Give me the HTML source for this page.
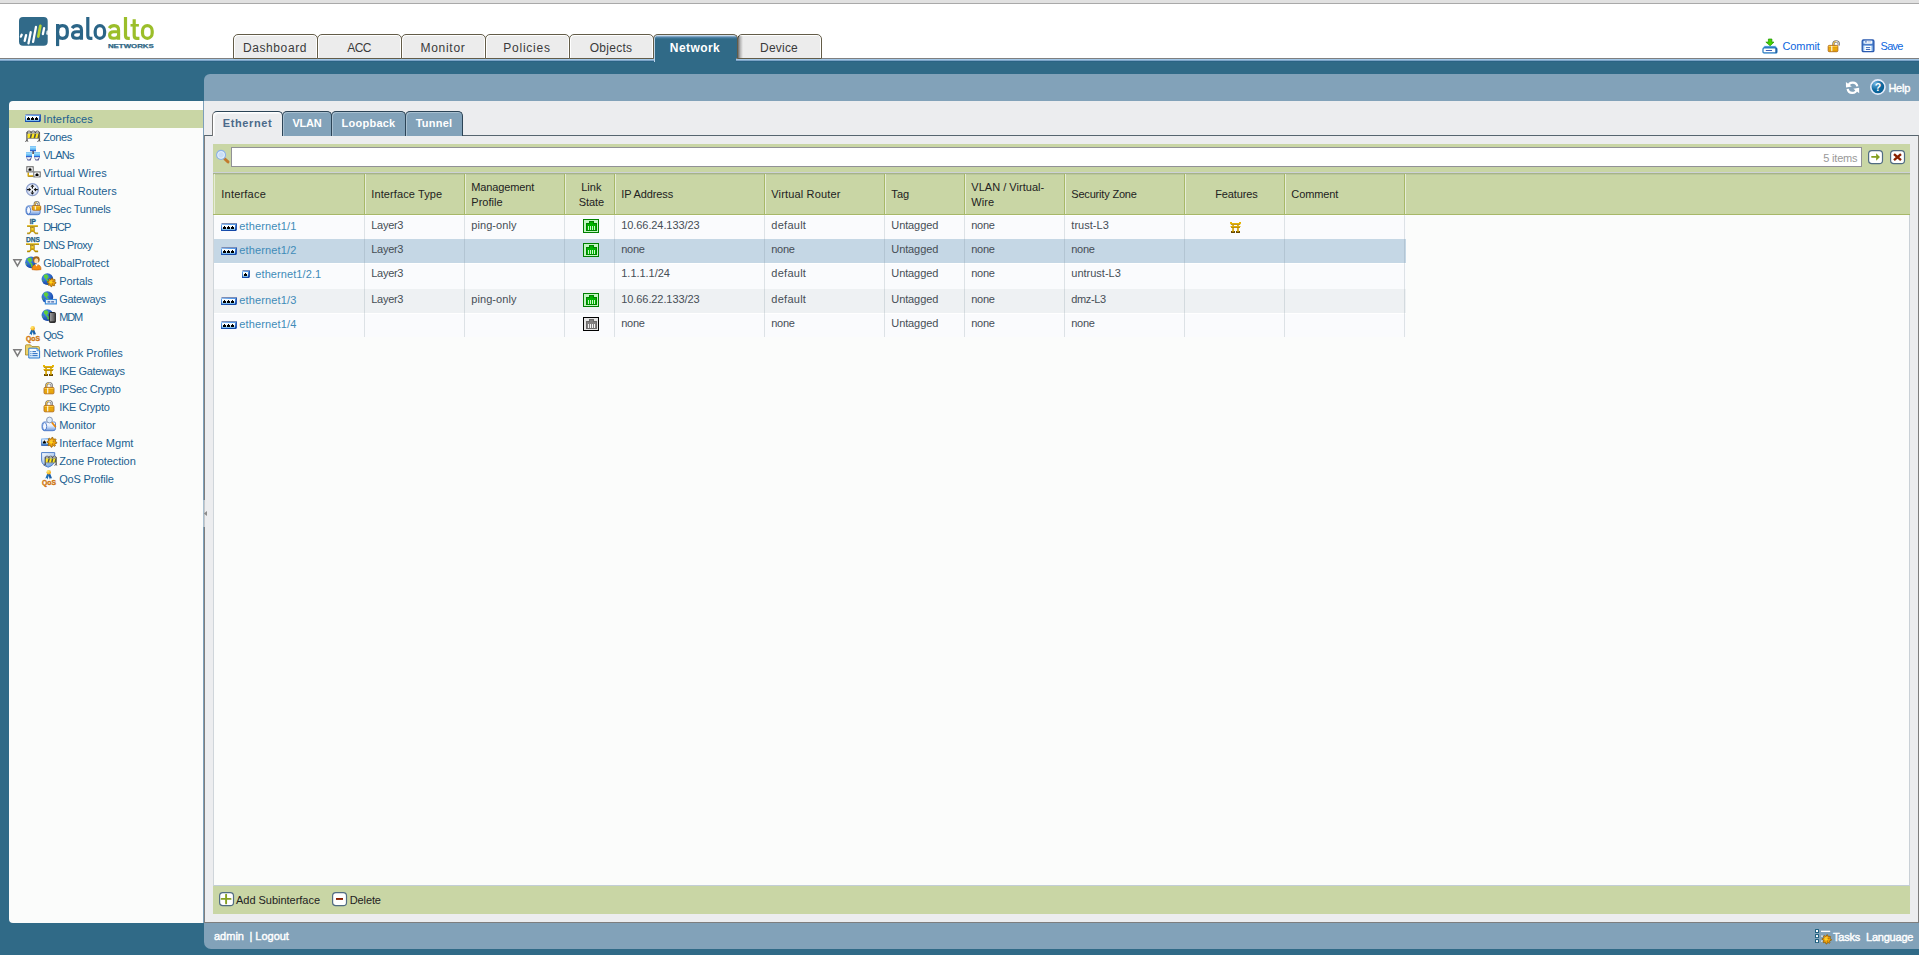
<!DOCTYPE html>
<html>
<head>
<meta charset="utf-8">
<title>Interfaces</title>
<style>
*{box-sizing:border-box;}
html,body{margin:0;padding:0;}
body{width:1919px;height:955px;overflow:hidden;background:#306a87;font-family:"Liberation Sans",sans-serif;font-size:11px;color:#222;position:relative;}
.abs{position:absolute;white-space:nowrap;}
svg{display:block;overflow:visible;}
#topbar{left:0;top:0;width:1919px;height:3px;background:#e1e1e1;}
#topline{left:0;top:3px;width:1919px;height:1px;background:#a9a9a9;}
#hdr{left:0;top:4px;width:1919px;height:54px;background:#fff;}
#hl1{left:0;top:58px;width:1919px;height:1px;background:#7f7f7f;}
#hl2{left:0;top:59px;width:1919px;height:3px;background:linear-gradient(#a0c6e7 0,#a0c6e7 33.3%,#7ba3c6 33.3%,#7ba3c6 66.6%,#2b6385 66.6%);}
.nt{position:absolute;top:34px;width:85px;height:25px;border:1px solid #635c48;border-radius:5px 5px 0 0;background:#ececec;box-shadow:inset 1px 1px 0 #fff, inset -1px 0 0 #fff;}
.nt.act{background:linear-gradient(#eef4fb 0,#a8c4dc 1px,#5a8ab0 2px,#306a87 4px,#306a87 100%);border-color:#635c48 #635c48 transparent #635c48;box-shadow:inset 1px 0 0 rgba(215,230,245,.85);height:24px;border-bottom:none;z-index:2;}
.ntt{font-size:12px;line-height:14px;color:#3a3a3a;z-index:3;}
.ntt.b{color:#fff;font-weight:bold;}
.toplnk{color:#0c66de;font-size:11px;line-height:14px;}
#side{left:9px;top:101px;width:195px;height:822px;background:#fbfcfb;border-radius:4px 0 0 4px;border-right:1px solid #7c9fb9;}
.sl{color:#215f90;line-height:18px;height:18px;}
#mh{left:204px;top:74px;width:1715px;height:27px;background:#82a2b9;border-radius:6px 0 0 0;}
#mb{left:204px;top:101px;width:1715px;height:822px;background:#ecedef;}
#mf{left:204px;top:923px;width:1715px;height:26px;background:#82a2b9;border-radius:0 0 0 7px;}
#tabline{left:204px;top:135px;width:1715px;height:788px;border:1px solid #7e7e7e;border-top-color:#56656f;}
.st{position:absolute;top:111px;height:25px;border:1px solid #2c4456;border-bottom:none;border-radius:5px 5px 0 0;background:#82a2b9;box-shadow:inset 1px 1px 0 #a9c0d0;}
.st.act{background:#ecedef;box-shadow:inset 1px 1px 0 #fff, inset 2px 2px 0 rgba(255,255,255,.6);height:25px;z-index:2;border-left-color:#757575;}
.stt{color:#fff;font-weight:bold;font-size:11px;line-height:14px;z-index:3;}
.stt.a{color:#4b6a8a;}
.wt{color:#fff;line-height:13px;-webkit-text-stroke:.4px #fff;}
.cnt{color:#999;line-height:15px;}
#tb{left:213px;top:144px;width:1697px;height:28px;background:#c9d6a5;}
#srch{left:231px;top:147px;width:1631px;height:20px;background:#fff;border:1px solid #919196;}
#gh{left:213px;top:172px;width:1697px;height:43px;background:linear-gradient(#cdd2d6 0,#cdd2d6 1px,#a6b388 1px,#a6b388 2px,#bbc89b 2px,#bbc89b 3px,#c9d6a5 3px);border-bottom:1px solid #a7b868;}
#gb{left:213px;top:215px;width:1697px;height:671px;background:#fbfcfb;border-right:1px solid #c9d0d6;border-left:1px solid #cfd5da;border-bottom:1px solid #c3ced6;}
#bb{left:213px;top:886px;width:1697px;height:28px;background:#c9d6a5;}
.hc{color:#222;line-height:15px;}
.ct{color:#464e56;line-height:13px;}
.lnk{color:#3f8bb8;line-height:13px;}
.bt{color:#222;line-height:13px;}
#ntsh{left:738px;top:36px;width:5px;height:22px;background:linear-gradient(to right,rgba(0,0,0,.6),rgba(0,0,0,.25) 40%,rgba(0,0,0,0));z-index:3;}
#ntfill{left:654px;top:58px;width:82px;height:4px;background:#306a87;z-index:3;border-left:1px solid #b9d3ea;}
</style>
</head>
<body>
<svg width="0" height="0" style="position:absolute"><defs>
<linearGradient id="gIf" x1="0" y1="0" x2="0" y2="1"><stop offset="0" stop-color="#fff"/><stop offset=".5" stop-color="#eaf7ff"/><stop offset="1" stop-color="#62aeea"/></linearGradient>
<linearGradient id="gIfB" x1="0" y1="0" x2="0.25" y2="1"><stop offset="0" stop-color="#b9d3f3"/><stop offset=".22" stop-color="#5b9eea"/><stop offset="1" stop-color="#1346a6"/></linearGradient>
<linearGradient id="gMon" x1="0" y1="0" x2="0" y2="1"><stop offset="0" stop-color="#c0f4ff"/><stop offset="1" stop-color="#2b93ee"/></linearGradient>
<linearGradient id="gCyl" x1="0" y1="0" x2="0" y2="1"><stop offset="0" stop-color="#fff"/><stop offset=".45" stop-color="#e4edfb"/><stop offset="1" stop-color="#6c97dc"/></linearGradient>
<radialGradient id="gGlobe" cx=".35" cy=".3" r=".8"><stop offset="0" stop-color="#4f95ee"/><stop offset="1" stop-color="#0a3aa0"/></radialGradient>
<radialGradient id="gBall" cx=".35" cy=".3" r=".8"><stop offset="0" stop-color="#fff27a"/><stop offset="1" stop-color="#f09800"/></radialGradient>
<radialGradient id="gHelp" cx=".3" cy=".25" r=".9"><stop offset="0" stop-color="#6fb2df"/><stop offset=".5" stop-color="#0f6aa0"/><stop offset="1" stop-color="#045a8e"/></radialGradient>
<radialGradient id="gVr" cx=".5" cy=".4" r=".7"><stop offset="0" stop-color="#fff"/><stop offset="1" stop-color="#c3d3f2"/></radialGradient>
<linearGradient id="gLock" x1="0" y1="0" x2="1" y2="0"><stop offset="0" stop-color="#e08a10"/><stop offset=".45" stop-color="#ffd070"/><stop offset="1" stop-color="#e89418"/></linearGradient>
<linearGradient id="gShk" x1="0" y1="0" x2="1" y2="0"><stop offset="0" stop-color="#ffc83a"/><stop offset=".45" stop-color="#ffd766"/><stop offset=".6" stop-color="#f2f2f2"/><stop offset="1" stop-color="#cfcfcf"/></linearGradient>
<linearGradient id="gSave" x1="0" y1="0" x2="1" y2="0"><stop offset="0" stop-color="#4b82d0"/><stop offset=".2" stop-color="#cfe9ff"/><stop offset=".8" stop-color="#a9d2f6"/><stop offset="1" stop-color="#3a6cc0"/></linearGradient>
<linearGradient id="gShield" x1="0" y1="0" x2=".6" y2="1"><stop offset="0" stop-color="#fff"/><stop offset="1" stop-color="#7aa8e4"/></linearGradient>
<linearGradient id="gPhone" x1="0" y1="0" x2="1" y2="0"><stop offset="0" stop-color="#a5a5a5"/><stop offset="1" stop-color="#4a4a4a"/></linearGradient>
<linearGradient id="gDoc" x1="0" y1="0" x2="0" y2="1"><stop offset="0" stop-color="#fff"/><stop offset="1" stop-color="#cfe6f8"/></linearGradient>
<linearGradient id="gGold" x1="0" y1="0" x2="0" y2="1"><stop offset="0" stop-color="#f0c000"/><stop offset="1" stop-color="#b88600"/></linearGradient>
</defs></svg>
<div class="abs" id="topbar"></div><div class="abs" id="topline"></div>
<div class="abs" id="hdr"></div>
<div class="abs" id="hl1"></div><div class="abs" id="hl2"></div>
<svg class="abs" style="left:17px;top:14px" width="140" height="36" viewBox="0 0 140 36"><g transform="translate(-17,-14)">
<rect x="19" y="17" width="28.7" height="28.7" rx="4" fill="#316a89"/>
<g stroke="#fff" stroke-width="2.3" stroke-linecap="round" fill="none">
<path d="M20.9 36.6 L21.7 34.7"/>
<path d="M24.7 40.8 L26.1 35.1"/>
<path d="M28.5 43.3 L30.7 32.2"/>
<path d="M33.1 41.9 L35.95 27"/>
<path d="M42.9 34.1 L44.1 28.2"/>
</g>
<path d="M38.3 36.6 L40.35 25.8" stroke="#b5d334" stroke-width="2.7" stroke-linecap="round" fill="none"/>
<path d="M47.8 30.3 L46.6 31 L46.2 34.2 L47.8 34.9 Z" fill="#fff"/>
<g fill="none" stroke="#2b6587" stroke-width="3.2">
<path d="M57.6 24 V46.1"/>
<path d="M57.6 31 Q57.6 25.6 62.5 25.6 Q67.3 25.6 67.3 31 V32.9 Q67.3 38.3 62.5 38.3 Q57.6 38.3 57.6 32.9"/>
<path d="M87.8 16.9 V35.4 Q87.8 38.3 90.6 38.3 H92.4"/>
<rect x="95.2" y="25.6" width="9.4" height="12.7" rx="4.7" ry="5.4"/>
</g>
<g transform="translate(0,0)" fill="none" stroke="#2b6587" stroke-width="3.1"><path d="M72.1 28.2 Q73.8 25.6 77 25.6 Q81.5 25.6 81.5 30.2 V39.8"/><path d="M81.5 31.7 H76.6 Q72.5 31.7 72.5 35 Q72.5 38.3 76.4 38.3 Q81.5 38.3 81.5 34.4"/></g>
<g transform="translate(37.1,0)" fill="none" stroke="#9bbe2a" stroke-width="3.1"><path d="M72.1 28.2 Q73.8 25.6 77 25.6 Q81.5 25.6 81.5 30.2 V39.8"/><path d="M81.5 31.7 H76.6 Q72.5 31.7 72.5 35 Q72.5 38.3 76.4 38.3 Q81.5 38.3 81.5 34.4"/></g>
<g fill="none" stroke="#9bbe2a" stroke-width="3.2">
<path d="M125.5 16.9 V35.4 Q125.5 38.3 128.3 38.3 H129.8"/>
<path d="M134.2 19.2 V35.4 Q134.2 38.3 137 38.3 H139.4"/>
<path d="M130.5 25.3 H138.9" stroke-width="2.6"/>
<rect x="142.5" y="25.6" width="9.7" height="12.7" rx="4.85" ry="5.4"/>
</g>
<text x="107.9" y="47.7" font-family="Liberation Sans" font-weight="bold" font-size="6.1" fill="#2e6685" stroke="#2e6685" stroke-width=".25" textLength="45.9" lengthAdjust="spacingAndGlyphs">NETWORKS</text>
</g></svg>
<div class="nt" style="left:233px"></div>
<div class="abs ntt" style="left:232.5px;top:41px;letter-spacing:0.587px;width:85px;text-align:center;">Dashboard</div>
<div class="nt" style="left:317px"></div>
<div class="abs ntt" style="left:316.5px;top:41px;letter-spacing:-0.581px;width:85px;text-align:center;">ACC</div>
<div class="nt" style="left:401px"></div>
<div class="abs ntt" style="left:400.5px;top:41px;letter-spacing:0.712px;width:85px;text-align:center;">Monitor</div>
<div class="nt" style="left:485px"></div>
<div class="abs ntt" style="left:484.5px;top:41px;letter-spacing:0.755px;width:85px;text-align:center;">Policies</div>
<div class="nt" style="left:569px"></div>
<div class="abs ntt" style="left:568.5px;top:41px;letter-spacing:0.273px;width:85px;text-align:center;">Objects</div>
<div class="nt act" style="left:653px"></div>
<div class="abs ntt b" style="left:652.5px;top:41px;letter-spacing:0.422px;width:85px;text-align:center;">Network</div>
<div class="nt" style="left:737px"></div>
<div class="abs ntt" style="left:736.5px;top:41px;letter-spacing:0.219px;width:85px;text-align:center;">Device</div>
<div class="abs" id="ntsh"></div><div class="abs" id="ntfill"></div>
<svg class="abs" style="left:1762px;top:38px" width="16" height="16" viewBox="0 0 16 16"><path d="M1.4 10 L2.6 8.3 H13.4 L14.6 10 V14 Q14.6 14.9 13.7 14.9 H2.3 Q1.4 14.9 1.4 14 Z" fill="none" stroke="#bfeaff" stroke-width="1.6" opacity=".8"/><polygon points="6.4,1 9.9,1 9.9,4.1 12,4.1 8.15,7.8 3.85,4.1 6.4,4.1" fill="#46d400" stroke="#1f9400" stroke-width=".7" stroke-linejoin="round"/><polygon points="2.6,8.3 13.4,8.3 14.9,10.2 1,10.2" fill="#2a80c8"/><rect x="1" y="10" width="13.9" height="4.9" rx="1" fill="#fff" stroke="#2a7ac0" stroke-width="1.2"/><rect x="13.3" y="10" width="1.6" height="4.9" fill="#1c5fa4"/><rect x="3.8" y="12" width="6.2" height=".9" fill="#2a50b0"/></svg>
<div class="abs toplnk" style="left:1782.5px;top:39px;letter-spacing:-0.098px;">Commit</div>
<svg class="abs" style="left:1827px;top:39px" width="16" height="16" viewBox="0 0 16 16"><path d="M6.4 7.0 V5.1000000000000005 A2.7 2.7 0 0 1 11.8 5.1000000000000005 V6.5" fill="none" stroke="#7c7c7c" stroke-width="2.4"/><path d="M6.4 7.0 V5.1000000000000005 A2.7 2.7 0 0 1 11.8 5.1000000000000005 V6.5" fill="none" stroke="url(#gShk)" stroke-width="1"/><rect x="1.2" y="6.4" width="9.65" height="6.3" rx="1" fill="#f4b81c" stroke="#a8621a" stroke-width=".9"/><rect x="1.7" y="7.78" width="8.65" height="0.88" fill="#dc9600"/><rect x="1.7" y="9.55" width="8.65" height="0.88" fill="#dc9600"/><rect x="1.7" y="11.32" width="8.65" height="0.88" fill="#dc9600"/><rect x="1.7" y="6.9" width="8.65" height="0.88" fill="#ffd04a"/><rect x="4.09" y="6.9" width="1.3" height="5.3" fill="#fff" opacity=".8"/></svg>
<svg class="abs" style="left:1861px;top:39px" width="16" height="16" viewBox="0 0 16 16"><rect x="1.2" y="1" width="11.7" height="11.6" rx="1.2" fill="url(#gSave)" stroke="#2a5ab0" stroke-width="1.3"/><rect x="1.8" y="4.6" width="10.5" height="1.9" fill="#3a6cc0" opacity=".85"/><rect x="3.6" y="1.7" width="7.3" height="2.9" fill="#fff"/><rect x="4.4" y="1.7" width="1.1" height="2" fill="#2a5ab0"/><rect x="6.5" y="2" width="3.6" height="1.6" fill="#cfd8ea"/><rect x="3.9" y="7" width="6.3" height="5" fill="#fff"/><rect x="4.9" y="8.2" width="4.3" height=".9" fill="#2a5ab0"/><rect x="4.9" y="10.1" width="4.3" height=".9" fill="#2a5ab0"/></svg>
<div class="abs toplnk" style="left:1880.5px;top:39px;letter-spacing:-0.695px;">Save</div>
<div class="abs" id="side"></div>
<div class="abs" style="left:9px;top:110px;width:194px;height:18px;background:#c9d6a5"></div>
<svg class="abs" style="left:25px;top:114px" width="16" height="9" viewBox="0 0 16 9"><polygon points="1,0 16,0 15,1 0,1" fill="#7d8cb3"/><polygon points="15,1 16,0 16,7 15,8" fill="#2b5ab2"/><rect x="0" y="1" width="15" height="7" fill="url(#gIfB)"/><rect x="1" y="2" width="13" height="5" fill="url(#gIf)"/><path d="M2.0 6 v-2 h1 v-1 h1 v1 h1 v2 z" fill="#000"/><path d="M6.0 6 v-2 h1 v-1 h1 v1 h1 v2 z" fill="#000"/><path d="M10.0 6 v-2 h1 v-1 h1 v1 h1 v2 z" fill="#000"/></svg>
<div class="abs sl" style="left:43.2px;top:110px;letter-spacing:0.149px;">Interfaces</div>
<svg class="abs" style="left:25px;top:128px" width="16" height="18" viewBox="0 0 16 18"><path d="M2 4.2 V12.8 M14.4 4.2 V12.8" stroke="#4a4a4a" stroke-width="1.3" fill="none"/><path d="M0.3 13.5 L2.2 12.4 L2.9 13.7 M12.4 13.5 L14.4 12.4 L15.1 13.7" stroke="#4a4a4a" stroke-width="1" fill="none"/><path d="M2 5 Q2 2.9 4 3 Q6 2.9 6.1 4.8 Q6.2 2.9 8.2 3 Q10.2 2.9 10.3 4.8 Q10.4 2.9 12.4 3 Q14.4 2.9 14.4 5 Z" fill="#fff" stroke="#2a2a2a" stroke-width=".75"/><rect x="2.65" y="5.7" width="11.7" height="4.6" fill="#ffe81c"/><polygon points="5.6,5.7 7.3,5.7 6.2,10.3 4.5,10.3" fill="#55564a"/><polygon points="9.6,5.7 11.3,5.7 10.2,10.3 8.5,10.3" fill="#55564a"/><polygon points="13.4,5.7 14.35,5.7 14.35,8.6 13.9,10.3 12.3,10.3" fill="#55564a"/><rect x="2.65" y="10.3" width="11.7" height=".7" fill="#7d7d7d"/></svg>
<div class="abs sl" style="left:43.2px;top:128px;letter-spacing:-0.396px;">Zones</div>
<svg class="abs" style="left:25px;top:146px" width="16" height="18" viewBox="0 0 16 18"><rect x="7.4" y="5" width="1.4" height="3" fill="#334"/><rect x="5" y="0.1" width="6" height="5" fill="url(#gMon)"/><rect x="5" y="0.1" width="6" height=".7" fill="#6bb4f2"/><rect x="5" y="4.3" width="6" height=".9" fill="#2a4cc0"/><rect x="1" y="6.1" width="6" height="5" fill="url(#gMon)"/><rect x="1" y="6.1" width="6" height=".7" fill="#6bb4f2"/><rect x="1" y="10.3" width="6" height=".9" fill="#2a4cc0"/><rect x="9" y="6.1" width="6" height="5" fill="url(#gMon)"/><rect x="9" y="6.1" width="6" height=".7" fill="#6bb4f2"/><rect x="9" y="10.3" width="6" height=".9" fill="#2a4cc0"/><polygon points="1.2,11.2 6.8,11.2 5.6,14.6 2.6,14.6" fill="#4a4f8c"/><polygon points="1.4,11.2 6.4,11.2 4.4,13.399999999999999 2.9,13.399999999999999" fill="#f4f5f9"/><polygon points="9.2,11.2 14.8,11.2 13.6,14.6 10.6,14.6" fill="#4a4f8c"/><polygon points="9.4,11.2 14.4,11.2 12.4,13.399999999999999 10.9,13.399999999999999" fill="#f4f5f9"/></svg>
<div class="abs sl" style="left:43.2px;top:146px;letter-spacing:-0.710px;">VLANs</div>
<svg class="abs" style="left:25px;top:164px" width="16" height="18" viewBox="0 0 16 18"><path d="M3.4 8.4 V12.5 H8.4" stroke="#6a5618" stroke-width=".8" fill="none"/><path d="M3.2 8.4 V11.9 H8.4" stroke="#e0ac00" stroke-width="1.3" fill="none"/><rect x="1.1" y="2.1" width="7.8" height="6.4" rx=".8" fill="#858585"/><rect x="2.3" y="3.3" width="5.4" height="4" rx=".8" fill="#f6f6f6"/><path d="M3.5 6.800000000000001 v-2 h1 v-1 h1 v1 h1 v2 z" fill="#000"/><rect x="8.1" y="7.2" width="7.8" height="6.4" rx=".8" fill="#858585"/><rect x="9.299999999999999" y="8.4" width="5.4" height="4" rx=".8" fill="#f6f6f6"/><path d="M10.5 11.9 v-2 h1 v-1 h1 v1 h1 v2 z" fill="#000"/></svg>
<div class="abs sl" style="left:43.2px;top:164px;letter-spacing:0.111px;">Virtual Wires</div>
<svg class="abs" style="left:25px;top:182px" width="16" height="18" viewBox="0 0 16 18"><circle cx="7.4" cy="7.6" r="6" fill="url(#gVr)" stroke="#8c9ecb" stroke-width="1.3"/><polygon points="7.4,2.3999999999999995 5.5,4.8 9.3,4.8" fill="#111"/><rect x="6.800000000000001" y="4.699999999999999" width="1.2" height="1.9" fill="#111"/><polygon points="7.4,12.8 5.5,10.399999999999999 9.3,10.399999999999999" fill="#111"/><rect x="6.800000000000001" y="8.6" width="1.2" height="1.9" fill="#111"/><polygon points="6.2,7.6 3.8000000000000003,5.699999999999999 3.8000000000000003,9.5" fill="#111"/><rect x="2.0" y="7.0" width="2" height="1.2" fill="#111"/><polygon points="8.6,7.6 11.0,5.699999999999999 11.0,9.5" fill="#111"/><rect x="10.8" y="7.0" width="2" height="1.2" fill="#111"/></svg>
<div class="abs sl" style="left:43.2px;top:182px;letter-spacing:0.076px;">Virtual Routers</div>
<svg class="abs" style="left:25px;top:200px" width="16" height="18" viewBox="0 0 16 18"><path d="M3.26 5.9 H13.9 Q15.1 5.9 15.1 7.1000000000000005 V12.7 Q15.1 14.7 12.6 14.7 H3.26 A2.3 4.3999999999999995 0 0 1 3.26 5.9 Z" fill="url(#gCyl)" stroke="#4a78c8" stroke-width=".9"/><ellipse cx="3.56" cy="10.3" rx="2.1" ry="3.7999999999999994" fill="#f4f8ff" stroke="#4a78c8" stroke-width=".9"/><path d="M9.799999999999999 6.3 V4.200000000000001 A1.9000000000000006 1.9000000000000006 0 0 1 13.600000000000001 4.200000000000001 V6.3" fill="none" stroke="#7c7c7c" stroke-width="2.4"/><path d="M9.799999999999999 6.3 V4.200000000000001 A1.9000000000000006 1.9000000000000006 0 0 1 13.600000000000001 4.200000000000001 V6.3" fill="none" stroke="url(#gShk)" stroke-width="1"/><rect x="7.2" y="5.7" width="8.5" height="4.5" rx="1" fill="#f4b81c" stroke="#a8621a" stroke-width=".9"/><rect x="7.7" y="6.78" width="7.5" height="0.58" fill="#dc9600"/><rect x="7.7" y="7.95" width="7.5" height="0.58" fill="#dc9600"/><rect x="7.7" y="9.12" width="7.5" height="0.58" fill="#dc9600"/><rect x="7.7" y="6.2" width="7.5" height="0.58" fill="#ffd04a"/><rect x="9.75" y="6.2" width="1.3" height="3.5" fill="#fff" opacity=".8"/></svg>
<div class="abs sl" style="left:43.2px;top:200px;letter-spacing:-0.272px;">IPSec Tunnels</div>
<svg class="abs" style="left:25px;top:218px" width="16" height="18" viewBox="0 0 16 18"><text x="4.8" y="5.6" font-family="Liberation Sans" font-weight="bold" font-size="6.6" fill="#1f5f85" stroke="#1f5f85" stroke-width=".3" textLength="6.2" lengthAdjust="spacingAndGlyphs">IP</text><rect x="2.1" y="7.2" width="10.8" height="1.5" fill="#e2b400"/><rect x="2.1" y="8.3" width="10.8" height=".5" fill="#8c6c00"/><rect x="6.7" y="8.7" width="1.4" height="1" fill="#c49600"/><rect x="5.5" y="9.4" width="3.8" height="4.2" fill="#d9aa00" stroke="#8c6c00" stroke-width=".5"/><rect x="6.5" y="10.4" width="1.9" height="1.1" fill="#ffec6e"/><path d="M6.0 13.600000000000001 L4.6000000000000005 15.100000000000001 H2.1000000000000005 M8.8 13.600000000000001 L10.2 15.100000000000001 H13.100000000000001" stroke="#c99c00" stroke-width="1.4" fill="none"/><path d="M2.1000000000000005 15.8 H4.800000000000001 M10.0 15.8 H13.100000000000001" stroke="#806200" stroke-width=".5" fill="none"/></svg>
<div class="abs sl" style="left:43.2px;top:218px;letter-spacing:-1.043px;">DHCP</div>
<svg class="abs" style="left:25px;top:236px" width="16" height="18" viewBox="0 0 16 18"><text x="1" y="5.9" font-family="Liberation Sans" font-weight="bold" font-size="6.9" fill="#1f5f85" stroke="#1f5f85" stroke-width=".25" textLength="14" lengthAdjust="spacingAndGlyphs">DNS</text><rect x="1" y="7.3" width="13" height="1.5" fill="#e2b400"/><rect x="1" y="8.4" width="13" height=".5" fill="#8c6c00"/><rect x="6.7" y="8.8" width="1.4" height="1" fill="#c49600"/><rect x="5.5" y="9.5" width="3.8" height="4.2" fill="#d9aa00" stroke="#8c6c00" stroke-width=".5"/><rect x="6.5" y="10.5" width="1.9" height="1.1" fill="#ffec6e"/><path d="M6.0 13.7 L4.6000000000000005 15.2 H2.1000000000000005 M8.8 13.7 L10.2 15.2 H13.100000000000001" stroke="#c99c00" stroke-width="1.4" fill="none"/><path d="M2.1000000000000005 15.899999999999999 H4.800000000000001 M10.0 15.899999999999999 H13.100000000000001" stroke="#806200" stroke-width=".5" fill="none"/></svg>
<div class="abs sl" style="left:43.2px;top:236px;letter-spacing:-0.612px;">DNS Proxy</div>
<svg class="abs" style="left:25px;top:254px" width="16" height="18" viewBox="0 0 16 18"><circle cx="6.05" cy="8.45" r="5.85" fill="url(#gGlobe)"/><path transform="translate(0.20000000000000018,2.5999999999999996)" d="M2.2 2.1 Q3.4 .9 5 1.2 L6.6 2 L6 3.2 L7.2 3.6 L6.4 5 L5.2 4.8 L5.6 6.2 L6.9 7 L7.6 9.2 L6.6 10.8 L5.8 9.6 L5.9 8 L4.6 6.8 L3.6 5 L2.6 4.4 Z" fill="#5fcf3a"/><path transform="translate(0.20000000000000018,2.5999999999999996)" d="M1.2 6 L2 7.4 L1.8 8.6 L.8 7.6 Z" fill="#5fcf3a" opacity=".8"/><path d="M7 15.6 Q6.6 10.6 11.4 10.4 Q16.2 10.6 16 15.6 Q11.5 16.6 7 15.6 Z" fill="#f38d12" stroke="#c65c00" stroke-width=".6"/><path d="M10 10.3 L11.5 12.6 L13 10.3 Z" fill="#fff"/><circle cx="11.3" cy="5.6" r="3.4" fill="#a4651c"/><ellipse cx="11.3" cy="6.9" rx="2.1" ry="2.6" fill="#ffdcb0"/></svg>
<div class="abs sl" style="left:43.2px;top:254px;letter-spacing:-0.074px;">GlobalProtect</div>
<svg class="abs" style="left:13px;top:259px" width="10" height="9" viewBox="0 0 10 9"><polygon points="0.9,0.8 8,0.8 4.45,6.9" fill="#fdfdfd" stroke="#7c7c7c" stroke-width="1.5" stroke-linejoin="miter"/></svg>
<svg class="abs" style="left:41px;top:272px" width="16" height="18" viewBox="0 0 16 18"><circle cx="6.4" cy="7.05" r="5.85" fill="url(#gGlobe)"/><path transform="translate(0.5500000000000007,1.2000000000000002)" d="M2.2 2.1 Q3.4 .9 5 1.2 L6.6 2 L6 3.2 L7.2 3.6 L6.4 5 L5.2 4.8 L5.6 6.2 L6.9 7 L7.6 9.2 L6.6 10.8 L5.8 9.6 L5.9 8 L4.6 6.8 L3.6 5 L2.6 4.4 Z" fill="#5fcf3a"/><path transform="translate(0.5500000000000007,1.2000000000000002)" d="M1.2 6 L2 7.4 L1.8 8.6 L.8 7.6 Z" fill="#5fcf3a" opacity=".8"/><polygon points="15.00,10.40 14.92,11.24 13.56,11.58 13.27,12.12 13.74,13.44 13.09,13.98 11.88,13.26 11.30,13.44 10.70,14.70 9.86,14.62 9.52,13.26 8.98,12.97 7.66,13.44 7.12,12.79 7.84,11.58 7.66,11.00 6.40,10.40 6.48,9.56 7.84,9.22 8.13,8.68 7.66,7.36 8.31,6.82 9.52,7.54 10.10,7.36 10.70,6.10 11.54,6.18 11.88,7.54 12.42,7.83 13.74,7.36 14.28,8.01 13.56,9.22 13.74,9.80" fill="#eea10a" stroke="#8f5c06" stroke-width=".8" stroke-linejoin="round"/><circle cx="10.1" cy="9.8" r="1.81" fill="#fbc230"/><circle cx="9.899999999999999" cy="10.6" r=".75" fill="#fff200"/><circle cx="12.0" cy="9.4" r=".5" fill="#8a5a00"/><circle cx="11.299999999999999" cy="12.0" r=".5" fill="#8a5a00"/></svg>
<div class="abs sl" style="left:59.2px;top:272px;letter-spacing:-0.093px;">Portals</div>
<svg class="abs" style="left:41px;top:290px" width="16" height="18" viewBox="0 0 16 18"><circle cx="6.4" cy="7.05" r="5.85" fill="url(#gGlobe)"/><path transform="translate(0.5500000000000007,1.2000000000000002)" d="M2.2 2.1 Q3.4 .9 5 1.2 L6.6 2 L6 3.2 L7.2 3.6 L6.4 5 L5.2 4.8 L5.6 6.2 L6.9 7 L7.6 9.2 L6.6 10.8 L5.8 9.6 L5.9 8 L4.6 6.8 L3.6 5 L2.6 4.4 Z" fill="#5fcf3a"/><path transform="translate(0.5500000000000007,1.2000000000000002)" d="M1.2 6 L2 7.4 L1.8 8.6 L.8 7.6 Z" fill="#5fcf3a" opacity=".8"/><rect x="4.4" y="9.5" width="10.9" height="4.4" fill="#fff" stroke="#3a8ad8" stroke-width="1.2"/><rect x="5.6" y="10.6" width="8.5" height="2.2" fill="#dcecfb"/><path d="M6.6 11.9 H9.2 M10.2 11.9 H13" stroke="#1f3f90" stroke-width="1"/></svg>
<div class="abs sl" style="left:59.2px;top:290px;letter-spacing:-0.315px;">Gateways</div>
<svg class="abs" style="left:41px;top:308px" width="16" height="18" viewBox="0 0 16 18"><circle cx="6.4" cy="7.05" r="5.85" fill="url(#gGlobe)"/><path transform="translate(0.5500000000000007,1.2000000000000002)" d="M2.2 2.1 Q3.4 .9 5 1.2 L6.6 2 L6 3.2 L7.2 3.6 L6.4 5 L5.2 4.8 L5.6 6.2 L6.9 7 L7.6 9.2 L6.6 10.8 L5.8 9.6 L5.9 8 L4.6 6.8 L3.6 5 L2.6 4.4 Z" fill="#5fcf3a"/><path transform="translate(0.5500000000000007,1.2000000000000002)" d="M1.2 6 L2 7.4 L1.8 8.6 L.8 7.6 Z" fill="#5fcf3a" opacity=".8"/><rect x="8.4" y="4.5" width="6" height="9.8" rx=".9" fill="url(#gPhone)" stroke="#161616" stroke-width=".9"/><rect x="8.4" y="13.6" width="6" height=".9" fill="#111"/></svg>
<div class="abs sl" style="left:59.2px;top:308px;letter-spacing:-1.160px;">MDM</div>
<svg class="abs" style="left:25px;top:326px" width="16" height="18" viewBox="0 0 16 18"><polygon points="6.3,3.4 8.2,4.4 6.5,9.4 5.7,7.9 4.3,8.6" fill="#1d6fb8"/><polygon points="9.1,3.4 7.2,4.4 8.9,9.4 9.7,7.9 11.1,8.6" fill="#1b5fa8"/><circle cx="7.7" cy="2.2" r="2.2" fill="url(#gBall)"/><text x="1" y="15.1" font-family="Liberation Sans" font-weight="bold" font-size="6.4" fill="#cf7610" stroke="#cf7610" stroke-width=".35" textLength="14" lengthAdjust="spacingAndGlyphs">QoS</text></svg>
<div class="abs sl" style="left:43.2px;top:326px;letter-spacing:-0.839px;">QoS</div>
<svg class="abs" style="left:25px;top:344px" width="16" height="18" viewBox="0 0 16 18"><path d="M0.5 11 V1.6 Q0.5 .8 1.3 .8 H5.4 L7 2.5 H13.6 Q14.4 2.5 14.4 3.3 V11 Z" fill="#ecd268" stroke="#a5872a" stroke-width=".8"/><path d="M3.8 4.2 H12 L14.6 6.8 V14 H3.8 Z" fill="url(#gDoc)" stroke="#2a7ad0" stroke-width="1"/><path d="M12 4.2 V6.8 H14.6" fill="#bcd9f2" stroke="#2a7ad0" stroke-width=".7"/><path d="M5.4 7.6 H6.4 M7.4 7.6 H11 M5.4 9.6 H6.4 M7.4 9.6 H12.6 M5.4 11.6 H6.4 M7.4 11.6 H12.6" stroke="#2a6fc4" stroke-width="1"/></svg>
<div class="abs sl" style="left:43.2px;top:344px;letter-spacing:-0.036px;">Network Profiles</div>
<svg class="abs" style="left:13px;top:349px" width="10" height="9" viewBox="0 0 10 9"><polygon points="0.9,0.8 8,0.8 4.45,6.9" fill="#fdfdfd" stroke="#7c7c7c" stroke-width="1.5" stroke-linejoin="miter"/></svg>
<svg class="abs" style="left:41px;top:362px" width="16" height="18" viewBox="0 0 16 18"><g transform="translate(2,3)"><rect x="0" y="0" width="2" height="1.6" fill="#e6b400"/><rect x="9" y="0" width="2" height="1.6" fill="#e6b400"/><rect x="0.3" y="1" width="10.4" height="1.3" fill="#e6b400"/><rect x="1" y="2.1" width="9" height=".8" fill="#b58400"/><rect x="2.2" y="2.8" width="1.7" height="6.6" fill="#d9a600"/><rect x="7.1" y="2.8" width="1.7" height="6.6" fill="#d9a600"/><path d="M0 4 L1 4 H10 L11 4 L10 5 H1 Z" fill="#e6b400"/><rect x="1" y="4.9" width="9" height="1" fill="#b58400"/><rect x="1" y="9" width="4" height="2" fill="#6a4a00"/><rect x="6" y="9" width="4" height="2" fill="#6a4a00"/><rect x="2.2" y="9" width="1.6" height="1" fill="#c99a00"/><rect x="7.2" y="9" width="1.6" height="1" fill="#c99a00"/></g></svg>
<div class="abs sl" style="left:59.2px;top:362px;letter-spacing:-0.350px;">IKE Gateways</div>
<svg class="abs" style="left:41px;top:380px" width="16" height="18" viewBox="0 0 16 18"><path d="M5.2 8.0 V5.8999999999999995 A2.8 2.8 0 0 1 10.8 5.8999999999999995 V8.0" fill="none" stroke="#7c7c7c" stroke-width="2.4"/><path d="M5.2 8.0 V5.8999999999999995 A2.8 2.8 0 0 1 10.8 5.8999999999999995 V8.0" fill="none" stroke="url(#gShk)" stroke-width="1"/><rect x="3.05" y="7.4" width="9.9" height="6.4" rx="1" fill="#f4b81c" stroke="#a8621a" stroke-width=".9"/><rect x="3.55" y="8.80" width="8.9" height="0.90" fill="#dc9600"/><rect x="3.55" y="10.60" width="8.9" height="0.90" fill="#dc9600"/><rect x="3.55" y="12.40" width="8.9" height="0.90" fill="#dc9600"/><rect x="3.55" y="7.9" width="8.9" height="0.90" fill="#ffd04a"/><rect x="6.02" y="7.9" width="1.3" height="5.4" fill="#fff" opacity=".8"/></svg>
<div class="abs sl" style="left:59.2px;top:380px;letter-spacing:-0.293px;">IPSec Crypto</div>
<svg class="abs" style="left:41px;top:398px" width="16" height="18" viewBox="0 0 16 18"><path d="M5.2 8.0 V5.8999999999999995 A2.8 2.8 0 0 1 10.8 5.8999999999999995 V8.0" fill="none" stroke="#7c7c7c" stroke-width="2.4"/><path d="M5.2 8.0 V5.8999999999999995 A2.8 2.8 0 0 1 10.8 5.8999999999999995 V8.0" fill="none" stroke="url(#gShk)" stroke-width="1"/><rect x="3.05" y="7.4" width="9.9" height="6.4" rx="1" fill="#f4b81c" stroke="#a8621a" stroke-width=".9"/><rect x="3.55" y="8.80" width="8.9" height="0.90" fill="#dc9600"/><rect x="3.55" y="10.60" width="8.9" height="0.90" fill="#dc9600"/><rect x="3.55" y="12.40" width="8.9" height="0.90" fill="#dc9600"/><rect x="3.55" y="7.9" width="8.9" height="0.90" fill="#ffd04a"/><rect x="6.02" y="7.9" width="1.3" height="5.4" fill="#fff" opacity=".8"/></svg>
<div class="abs sl" style="left:59.2px;top:398px;letter-spacing:-0.289px;">IKE Crypto</div>
<svg class="abs" style="left:41px;top:416px" width="16" height="18" viewBox="0 0 16 18"><path d="M3.3 6 H13.3 Q14.5 6 14.5 7.2 V12.7 Q14.5 14.7 12.0 14.7 H3.3 A2.3 4.35 0 0 1 3.3 6 Z" fill="url(#gCyl)" stroke="#4a78c8" stroke-width=".9"/><ellipse cx="3.6" cy="10.35" rx="2.1" ry="3.7499999999999996" fill="#f4f8ff" stroke="#4a78c8" stroke-width=".9"/><path d="M10.6 6.3 L14.4 10.6" stroke="#e8860c" stroke-width="1.7" stroke-linecap="round"/><circle cx="8.5" cy="4" r="2.9" fill="#dcecfb" stroke="#8a9ab8" stroke-width="1"/></svg>
<div class="abs sl" style="left:59.2px;top:416px;letter-spacing:-0.027px;">Monitor</div>
<svg class="abs" style="left:41px;top:434px" width="16" height="18" viewBox="0 0 16 18"><rect x="0.2" y="4.3" width="8" height="7.5" fill="url(#gIfB)"/><rect x="1.2" y="5.4" width="6" height="5.2" fill="url(#gIf)"/><path d="M1.9 9.6 v-2 h1 v-1 h1 v1 h1 v2 z" fill="#000"/><polygon points="15.80,8.30 15.71,9.26 14.16,9.65 13.83,10.26 14.36,11.76 13.62,12.37 12.25,11.56 11.59,11.76 10.90,13.20 9.94,13.11 9.55,11.56 8.94,11.23 7.44,11.76 6.83,11.02 7.64,9.65 7.44,8.99 6.00,8.30 6.09,7.34 7.64,6.95 7.97,6.34 7.44,4.84 8.18,4.23 9.55,5.04 10.21,4.84 10.90,3.40 11.86,3.49 12.25,5.04 12.86,5.37 14.36,4.84 14.97,5.58 14.16,6.95 14.36,7.61" fill="#eea10a" stroke="#8f5c06" stroke-width=".8" stroke-linejoin="round"/><circle cx="10.3" cy="7.700000000000001" r="2.06" fill="#fbc230"/><circle cx="10.1" cy="8.5" r=".75" fill="#fff200"/><circle cx="12.200000000000001" cy="7.300000000000001" r=".5" fill="#8a5a00"/><circle cx="11.5" cy="9.9" r=".5" fill="#8a5a00"/></svg>
<div class="abs sl" style="left:59.2px;top:434px;letter-spacing:0.067px;">Interface Mgmt</div>
<svg class="abs" style="left:41px;top:452px" width="16" height="18" viewBox="0 0 16 18"><path d="M0.6 0.6 H13.7 V8 Q13.7 13 7.2 15.2 Q0.6 13 0.6 8 Z" fill="url(#gShield)" stroke="#4f7fcb" stroke-width="1"/><g transform="translate(2.5,1.5) scale(.88)"><path d="M2 4.2 V12.8 M14.4 4.2 V12.8" stroke="#4a4a4a" stroke-width="1.3" fill="none"/><path d="M0.3 13.5 L2.2 12.4 L2.9 13.7 M12.4 13.5 L14.4 12.4 L15.1 13.7" stroke="#4a4a4a" stroke-width="1" fill="none"/><path d="M2 5 Q2 2.9 4 3 Q6 2.9 6.1 4.8 Q6.2 2.9 8.2 3 Q10.2 2.9 10.3 4.8 Q10.4 2.9 12.4 3 Q14.4 2.9 14.4 5 Z" fill="#fff" stroke="#2a2a2a" stroke-width=".75"/><rect x="2.65" y="5.7" width="11.7" height="4.6" fill="#ffe81c"/><polygon points="5.6,5.7 7.3,5.7 6.2,10.3 4.5,10.3" fill="#55564a"/><polygon points="9.6,5.7 11.3,5.7 10.2,10.3 8.5,10.3" fill="#55564a"/><polygon points="13.4,5.7 14.35,5.7 14.35,8.6 13.9,10.3 12.3,10.3" fill="#55564a"/><rect x="2.65" y="10.3" width="11.7" height=".7" fill="#7d7d7d"/></g></svg>
<div class="abs sl" style="left:59.2px;top:452px;letter-spacing:-0.077px;">Zone Protection</div>
<svg class="abs" style="left:41px;top:470px" width="16" height="18" viewBox="0 0 16 18"><polygon points="6.3,3.4 8.2,4.4 6.5,9.4 5.7,7.9 4.3,8.6" fill="#1d6fb8"/><polygon points="9.1,3.4 7.2,4.4 8.9,9.4 9.7,7.9 11.1,8.6" fill="#1b5fa8"/><circle cx="7.7" cy="2.2" r="2.2" fill="url(#gBall)"/><text x="1" y="15.1" font-family="Liberation Sans" font-weight="bold" font-size="6.4" fill="#cf7610" stroke="#cf7610" stroke-width=".35" textLength="14" lengthAdjust="spacingAndGlyphs">QoS</text></svg>
<div class="abs sl" style="left:59.2px;top:470px;letter-spacing:-0.159px;">QoS Profile</div>
<div class="abs" id="mh"></div>
<div class="abs" id="mb"></div>
<div class="abs" id="mf"></div>
<div class="abs" id="tabline"></div>
<div class="st act" style="left:212px;width:71px"></div>
<div class="abs stt a" style="left:212px;top:116px;letter-spacing:0.609px;width:71px;text-align:center;">Ethernet</div>
<div class="st" style="left:282px;width:50px"></div>
<div class="abs stt" style="left:282px;top:116px;letter-spacing:-0.238px;width:50px;text-align:center;">VLAN</div>
<div class="st" style="left:331px;width:75px"></div>
<div class="abs stt" style="left:331px;top:116px;letter-spacing:0.256px;width:75px;text-align:center;">Loopback</div>
<div class="st" style="left:405px;width:58px"></div>
<div class="abs stt" style="left:405px;top:116px;letter-spacing:0.211px;width:58px;text-align:center;">Tunnel</div>
<div class="abs" style="left:203px;top:500px;width:1px;height:27px;background:#a9c0d1;z-index:5"></div><div class="abs" style="left:204px;top:500px;width:1px;height:27px;background:#c6c8ca;z-index:5"></div>
<svg class="abs" style="left:203px;top:510px;z-index:6" width="6" height="8" viewBox="0 0 6 8"><polygon points="0.8,3.4 4,1 4,5.9" fill="#8c8c8c"/></svg>
<svg class="abs" style="left:1845px;top:80px" width="16" height="16" viewBox="0 0 16 16"><path d="M3.2 6.6 A4.6 4.6 0 0 1 12.3 6.4" fill="none" stroke="#fff" stroke-width="2.3"/><polygon points="0.9,1.9 1,7.6 6.8,6.6" fill="#fff"/><path d="M2.7 8.9 A4.6 4.6 0 0 0 11.8 9.1" fill="none" stroke="#fff" stroke-width="2.3"/><polygon points="14.2,13.3 14.1,7.7 8.3,8.7" fill="#fff"/></svg>
<svg class="abs" style="left:1869px;top:79px" width="18" height="16" viewBox="0 0 18 16"><circle cx="8.9" cy="8" r="7.1" fill="url(#gHelp)" stroke="#e6edfb" stroke-width="1.6"/><text x="8.9" y="11.7" text-anchor="middle" font-family="Liberation Sans" font-weight="bold" font-size="10.5" fill="#fff">?</text></svg>
<div class="abs wt" style="left:1888.4px;top:82px;letter-spacing:-0.231px;">Help</div>
<div class="abs" id="tb"></div>
<svg class="abs" style="left:215px;top:148px" width="16" height="16" viewBox="0 0 16 16"><path d="M9.6 10.8 L13 13.9" stroke="#c27a2c" stroke-width="2.9" stroke-linecap="round"/><circle cx="6.05" cy="6.9" r="4.4" fill="#c9def5" stroke="#8db3e6" stroke-width="1.3"/><circle cx="6.05" cy="6.9" r="3.4" fill="none" stroke="#eef5fd" stroke-width=".8"/></svg>
<div class="abs" id="srch"></div>
<div class="abs cnt" style="left:1823.3px;top:151px;letter-spacing:-0.210px;">5 items</div>
<svg class="abs" style="left:1868px;top:150px" width="15" height="15" viewBox="0 0 15 15"><rect x="0.6" y="0.6" width="13.9" height="13" rx="3.2" fill="#fff" stroke="#516c82" stroke-width="1.2"/><rect x="3.1" y="6" width="5.8" height="1.8" rx=".8" fill="#85a020"/><polygon points="8.1,3.2 12,6.9 8.1,10.7" fill="#85a020"/></svg>
<svg class="abs" style="left:1890px;top:150px" width="15" height="15" viewBox="0 0 15 15"><rect x="0.6" y="0.6" width="13.9" height="13" rx="3.2" fill="#fff" stroke="#516c82" stroke-width="1.2"/><path d="M4 4.1 L11 10.2 M11 4.1 L4 10.2" stroke="#8a2000" stroke-width="2.4"/></svg>
<div class="abs" id="gh"></div>
<div class="abs" id="gb"></div>
<div class="abs" id="bb"></div>
<div class="abs" style="left:364px;top:174px;width:1px;height:40px;background:#a7b868"></div>
<div class="abs" style="left:214px;top:174px;width:1px;height:40px;background:#e6ecd6"></div>
<div class="abs hc" style="left:221.3px;top:187px;letter-spacing:0.210px;">Interface</div>
<div class="abs" style="left:464px;top:174px;width:1px;height:40px;background:#a7b868"></div>
<div class="abs" style="left:365px;top:174px;width:1px;height:40px;background:#e6ecd6"></div>
<div class="abs hc" style="left:371.3px;top:187px;letter-spacing:0.099px;">Interface Type</div>
<div class="abs" style="left:564px;top:174px;width:1px;height:40px;background:#a7b868"></div>
<div class="abs" style="left:465px;top:174px;width:1px;height:40px;background:#e6ecd6"></div>
<div class="abs hc" style="left:471.3px;top:179.5px;letter-spacing:-0.142px;">Management</div>
<div class="abs hc" style="left:471.3px;top:194.5px;letter-spacing:0.030px;">Profile</div>
<div class="abs" style="left:614px;top:174px;width:1px;height:40px;background:#a7b868"></div>
<div class="abs" style="left:565px;top:174px;width:1px;height:40px;background:#e6ecd6"></div>
<div class="abs hc" style="left:571.4px;top:179.5px;letter-spacing:0.078px;width:40px;text-align:center;">Link</div>
<div class="abs hc" style="left:571.4px;top:194.5px;letter-spacing:-0.037px;width:40px;text-align:center;">State</div>
<div class="abs" style="left:764px;top:174px;width:1px;height:40px;background:#a7b868"></div>
<div class="abs" style="left:615px;top:174px;width:1px;height:40px;background:#e6ecd6"></div>
<div class="abs hc" style="left:621.3px;top:187px;letter-spacing:-0.120px;">IP Address</div>
<div class="abs" style="left:884px;top:174px;width:1px;height:40px;background:#a7b868"></div>
<div class="abs" style="left:765px;top:174px;width:1px;height:40px;background:#e6ecd6"></div>
<div class="abs hc" style="left:771.3px;top:187px;letter-spacing:0.160px;">Virtual Router</div>
<div class="abs" style="left:964px;top:174px;width:1px;height:40px;background:#a7b868"></div>
<div class="abs" style="left:885px;top:174px;width:1px;height:40px;background:#e6ecd6"></div>
<div class="abs hc" style="left:891.3px;top:187px;letter-spacing:0.083px;">Tag</div>
<div class="abs" style="left:1064px;top:174px;width:1px;height:40px;background:#a7b868"></div>
<div class="abs" style="left:965px;top:174px;width:1px;height:40px;background:#e6ecd6"></div>
<div class="abs hc" style="left:971.3px;top:179.5px;letter-spacing:0.023px;">VLAN / Virtual-</div>
<div class="abs hc" style="left:971.3px;top:194.5px;letter-spacing:0.073px;">Wire</div>
<div class="abs" style="left:1184px;top:174px;width:1px;height:40px;background:#a7b868"></div>
<div class="abs" style="left:1065px;top:174px;width:1px;height:40px;background:#e6ecd6"></div>
<div class="abs hc" style="left:1071.3px;top:187px;letter-spacing:-0.190px;">Security Zone</div>
<div class="abs" style="left:1284px;top:174px;width:1px;height:40px;background:#a7b868"></div>
<div class="abs" style="left:1185px;top:174px;width:1px;height:40px;background:#e6ecd6"></div>
<div class="abs hc" style="left:1191.4px;top:187px;letter-spacing:-0.115px;width:90px;text-align:center;">Features</div>
<div class="abs" style="left:1404px;top:174px;width:1px;height:40px;background:#a7b868"></div>
<div class="abs" style="left:1285px;top:174px;width:1px;height:40px;background:#e6ecd6"></div>
<div class="abs hc" style="left:1291.3px;top:187px;letter-spacing:-0.113px;">Comment</div>
<div class="abs" style="left:1405px;top:174px;width:1px;height:40px;background:#e6ecd6"></div>
<div class="abs" style="left:214px;top:215px;width:1192px;height:24px;background:#fafbfd;border-top:1px solid #fff"></div>
<svg class="abs" style="left:221px;top:223px" width="16" height="9" viewBox="0 0 16 9"><polygon points="1,0 16,0 15,1 0,1" fill="#7d8cb3"/><polygon points="15,1 16,0 16,7 15,8" fill="#2b5ab2"/><rect x="0" y="1" width="15" height="7" fill="url(#gIfB)"/><rect x="1" y="2" width="13" height="5" fill="url(#gIf)"/><path d="M2.0 6 v-2 h1 v-1 h1 v1 h1 v2 z" fill="#000"/><path d="M6.0 6 v-2 h1 v-1 h1 v1 h1 v2 z" fill="#000"/><path d="M10.0 6 v-2 h1 v-1 h1 v1 h1 v2 z" fill="#000"/></svg>
<div class="abs lnk" style="left:239.3px;top:220px;letter-spacing:0.131px;">ethernet1/1</div>
<div class="abs ct" style="left:371.3px;top:219px;letter-spacing:-0.290px;">Layer3</div>
<div class="abs ct" style="left:471.3px;top:219px;letter-spacing:0.062px;">ping-only</div>
<svg class="abs" style="left:583px;top:219px" width="16" height="14" viewBox="0 0 16 14"><g shape-rendering="crispEdges"><rect x="0" y="0" width="16" height="14" fill="#008000"/><rect x="1" y="1" width="14" height="12" fill="#c2f5c2"/><path d="M3 4 H6 V2 H11 V4 H14 V12 H3 Z" fill="#008300"/><path d="M4 5 H7 V3 H10 V5 H13 V11 H4 Z" fill="#00b300"/><rect x="5" y="7" width="1" height="4" fill="#c9f7c9"/><rect x="7" y="7" width="1" height="4" fill="#c9f7c9"/><rect x="9" y="7" width="1" height="4" fill="#c9f7c9"/><rect x="11" y="7" width="1" height="4" fill="#c9f7c9"/></g></svg>
<div class="abs ct" style="left:621.3px;top:219px;letter-spacing:-0.089px;">10.66.24.133/23</div>
<div class="abs ct" style="left:771.3px;top:219px;letter-spacing:0.267px;">default</div>
<div class="abs ct" style="left:891.3px;top:219px;letter-spacing:-0.102px;">Untagged</div>
<div class="abs ct" style="left:971.3px;top:219px;letter-spacing:-0.321px;">none</div>
<div class="abs ct" style="left:1071.3px;top:219px;letter-spacing:0.025px;">trust-L3</div>
<svg class="abs" style="left:1230px;top:222px" width="11" height="11" viewBox="0 0 11 11"><rect x="0" y="0" width="2" height="1.6" fill="#e6b400"/><rect x="9" y="0" width="2" height="1.6" fill="#e6b400"/><rect x="0.3" y="1" width="10.4" height="1.3" fill="#e6b400"/><rect x="1" y="2.1" width="9" height=".8" fill="#b58400"/><rect x="2.2" y="2.8" width="1.7" height="6.6" fill="#d9a600"/><rect x="7.1" y="2.8" width="1.7" height="6.6" fill="#d9a600"/><path d="M0 4 L1 4 H10 L11 4 L10 5 H1 Z" fill="#e6b400"/><rect x="1" y="4.9" width="9" height="1" fill="#b58400"/><rect x="1" y="9" width="4" height="2" fill="#6a4a00"/><rect x="6" y="9" width="4" height="2" fill="#6a4a00"/><rect x="2.2" y="9" width="1.6" height="1" fill="#c99a00"/><rect x="7.2" y="9" width="1.6" height="1" fill="#c99a00"/></svg>
<div class="abs" style="left:214px;top:239px;width:1192px;height:24px;background:#c5d7e5;border-top:1px solid #c5d7e5"></div>
<svg class="abs" style="left:221px;top:247px" width="16" height="9" viewBox="0 0 16 9"><polygon points="1,0 16,0 15,1 0,1" fill="#7d8cb3"/><polygon points="15,1 16,0 16,7 15,8" fill="#2b5ab2"/><rect x="0" y="1" width="15" height="7" fill="url(#gIfB)"/><rect x="1" y="2" width="13" height="5" fill="url(#gIf)"/><path d="M2.0 6 v-2 h1 v-1 h1 v1 h1 v2 z" fill="#000"/><path d="M6.0 6 v-2 h1 v-1 h1 v1 h1 v2 z" fill="#000"/><path d="M10.0 6 v-2 h1 v-1 h1 v1 h1 v2 z" fill="#000"/></svg>
<div class="abs lnk" style="left:239.3px;top:244px;letter-spacing:0.131px;">ethernet1/2</div>
<div class="abs ct" style="left:371.3px;top:243px;letter-spacing:-0.290px;">Layer3</div>
<svg class="abs" style="left:583px;top:243px" width="16" height="14" viewBox="0 0 16 14"><g shape-rendering="crispEdges"><rect x="0" y="0" width="16" height="14" fill="#008000"/><rect x="1" y="1" width="14" height="12" fill="#c2f5c2"/><path d="M3 4 H6 V2 H11 V4 H14 V12 H3 Z" fill="#008300"/><path d="M4 5 H7 V3 H10 V5 H13 V11 H4 Z" fill="#00b300"/><rect x="5" y="7" width="1" height="4" fill="#c9f7c9"/><rect x="7" y="7" width="1" height="4" fill="#c9f7c9"/><rect x="9" y="7" width="1" height="4" fill="#c9f7c9"/><rect x="11" y="7" width="1" height="4" fill="#c9f7c9"/></g></svg>
<div class="abs ct" style="left:621.3px;top:243px;letter-spacing:-0.321px;">none</div>
<div class="abs ct" style="left:771.3px;top:243px;letter-spacing:-0.321px;">none</div>
<div class="abs ct" style="left:891.3px;top:243px;letter-spacing:-0.102px;">Untagged</div>
<div class="abs ct" style="left:971.3px;top:243px;letter-spacing:-0.321px;">none</div>
<div class="abs ct" style="left:1071.3px;top:243px;letter-spacing:-0.321px;">none</div>
<div class="abs" style="left:214px;top:263px;width:1192px;height:26px;background:#fafbfd;border-top:1px solid #fff"></div>
<svg class="abs" style="left:242px;top:270px" width="8" height="8" viewBox="0 0 8 8"><polygon points="1,0 8,0 7,1 0,1" fill="#7d8cb3"/><polygon points="7,1 8,0 8,7 7,8" fill="#2b5ab2"/><rect x="0" y="1" width="7" height="7" fill="url(#gIfB)"/><rect x="1" y="2" width="5" height="5" fill="url(#gIf)"/><path d="M2.0 6 v-2 h1 v-1 h1 v1 h1 v2 z" fill="#000"/></svg>
<div class="abs lnk" style="left:255.3px;top:268px;letter-spacing:0.089px;">ethernet1/2.1</div>
<div class="abs ct" style="left:371.3px;top:267px;letter-spacing:-0.290px;">Layer3</div>
<div class="abs ct" style="left:621.3px;top:267px;letter-spacing:-0.044px;">1.1.1.1/24</div>
<div class="abs ct" style="left:771.3px;top:267px;letter-spacing:0.267px;">default</div>
<div class="abs ct" style="left:891.3px;top:267px;letter-spacing:-0.102px;">Untagged</div>
<div class="abs ct" style="left:971.3px;top:267px;letter-spacing:-0.321px;">none</div>
<div class="abs ct" style="left:1071.3px;top:267px;letter-spacing:-0.003px;">untrust-L3</div>
<div class="abs" style="left:214px;top:289px;width:1192px;height:24px;background:#eef1f3;border-top:1px solid #eef1f3"></div>
<svg class="abs" style="left:221px;top:297px" width="16" height="9" viewBox="0 0 16 9"><polygon points="1,0 16,0 15,1 0,1" fill="#7d8cb3"/><polygon points="15,1 16,0 16,7 15,8" fill="#2b5ab2"/><rect x="0" y="1" width="15" height="7" fill="url(#gIfB)"/><rect x="1" y="2" width="13" height="5" fill="url(#gIf)"/><path d="M2.0 6 v-2 h1 v-1 h1 v1 h1 v2 z" fill="#000"/><path d="M6.0 6 v-2 h1 v-1 h1 v1 h1 v2 z" fill="#000"/><path d="M10.0 6 v-2 h1 v-1 h1 v1 h1 v2 z" fill="#000"/></svg>
<div class="abs lnk" style="left:239.3px;top:294px;letter-spacing:0.131px;">ethernet1/3</div>
<div class="abs ct" style="left:371.3px;top:293px;letter-spacing:-0.290px;">Layer3</div>
<div class="abs ct" style="left:471.3px;top:293px;letter-spacing:0.062px;">ping-only</div>
<svg class="abs" style="left:583px;top:293px" width="16" height="14" viewBox="0 0 16 14"><g shape-rendering="crispEdges"><rect x="0" y="0" width="16" height="14" fill="#008000"/><rect x="1" y="1" width="14" height="12" fill="#c2f5c2"/><path d="M3 4 H6 V2 H11 V4 H14 V12 H3 Z" fill="#008300"/><path d="M4 5 H7 V3 H10 V5 H13 V11 H4 Z" fill="#00b300"/><rect x="5" y="7" width="1" height="4" fill="#c9f7c9"/><rect x="7" y="7" width="1" height="4" fill="#c9f7c9"/><rect x="9" y="7" width="1" height="4" fill="#c9f7c9"/><rect x="11" y="7" width="1" height="4" fill="#c9f7c9"/></g></svg>
<div class="abs ct" style="left:621.3px;top:293px;letter-spacing:-0.089px;">10.66.22.133/23</div>
<div class="abs ct" style="left:771.3px;top:293px;letter-spacing:0.267px;">default</div>
<div class="abs ct" style="left:891.3px;top:293px;letter-spacing:-0.102px;">Untagged</div>
<div class="abs ct" style="left:971.3px;top:293px;letter-spacing:-0.321px;">none</div>
<div class="abs ct" style="left:1071.3px;top:293px;letter-spacing:-0.381px;">dmz-L3</div>
<div class="abs" style="left:214px;top:313px;width:1192px;height:24px;background:#fafbfd;border-top:1px solid #fff"></div>
<svg class="abs" style="left:221px;top:321px" width="16" height="9" viewBox="0 0 16 9"><polygon points="1,0 16,0 15,1 0,1" fill="#7d8cb3"/><polygon points="15,1 16,0 16,7 15,8" fill="#2b5ab2"/><rect x="0" y="1" width="15" height="7" fill="url(#gIfB)"/><rect x="1" y="2" width="13" height="5" fill="url(#gIf)"/><path d="M2.0 6 v-2 h1 v-1 h1 v1 h1 v2 z" fill="#000"/><path d="M6.0 6 v-2 h1 v-1 h1 v1 h1 v2 z" fill="#000"/><path d="M10.0 6 v-2 h1 v-1 h1 v1 h1 v2 z" fill="#000"/></svg>
<div class="abs lnk" style="left:239.3px;top:318px;letter-spacing:0.131px;">ethernet1/4</div>
<svg class="abs" style="left:583px;top:317px" width="16" height="14" viewBox="0 0 16 14"><g shape-rendering="crispEdges"><rect x="0" y="0" width="16" height="14" fill="#000"/><rect x="1" y="1" width="14" height="12" fill="#e6e6e6"/><path d="M3 4 H6 V2 H11 V4 H14 V12 H3 Z" fill="#6c6a6a"/><path d="M4 5 H7 V3 H10 V5 H13 V11 H4 Z" fill="#838181"/><rect x="5" y="7" width="1" height="4" fill="#f4f4f4"/><rect x="7" y="7" width="1" height="4" fill="#f4f4f4"/><rect x="9" y="7" width="1" height="4" fill="#f4f4f4"/><rect x="11" y="7" width="1" height="4" fill="#f4f4f4"/></g></svg>
<div class="abs ct" style="left:621.3px;top:317px;letter-spacing:-0.321px;">none</div>
<div class="abs ct" style="left:771.3px;top:317px;letter-spacing:-0.321px;">none</div>
<div class="abs ct" style="left:891.3px;top:317px;letter-spacing:-0.102px;">Untagged</div>
<div class="abs ct" style="left:971.3px;top:317px;letter-spacing:-0.321px;">none</div>
<div class="abs ct" style="left:1071.3px;top:317px;letter-spacing:-0.321px;">none</div>
<div class="abs" style="left:364px;top:215px;width:1px;height:122px;background:rgba(120,135,150,.22)"></div>
<div class="abs" style="left:464px;top:215px;width:1px;height:122px;background:rgba(120,135,150,.22)"></div>
<div class="abs" style="left:564px;top:215px;width:1px;height:122px;background:rgba(120,135,150,.22)"></div>
<div class="abs" style="left:614px;top:215px;width:1px;height:122px;background:rgba(120,135,150,.22)"></div>
<div class="abs" style="left:764px;top:215px;width:1px;height:122px;background:rgba(120,135,150,.22)"></div>
<div class="abs" style="left:884px;top:215px;width:1px;height:122px;background:rgba(120,135,150,.22)"></div>
<div class="abs" style="left:964px;top:215px;width:1px;height:122px;background:rgba(120,135,150,.22)"></div>
<div class="abs" style="left:1064px;top:215px;width:1px;height:122px;background:rgba(120,135,150,.22)"></div>
<div class="abs" style="left:1184px;top:215px;width:1px;height:122px;background:rgba(120,135,150,.22)"></div>
<div class="abs" style="left:1284px;top:215px;width:1px;height:122px;background:rgba(120,135,150,.22)"></div>
<div class="abs" style="left:1404px;top:215px;width:1px;height:122px;background:rgba(120,135,150,.22)"></div>
<svg class="abs" style="left:219px;top:892px" width="15" height="15" viewBox="0 0 15 15"><rect x="0.6" y="0.6" width="13.9" height="13" rx="3.2" fill="#fff" stroke="#516c82" stroke-width="1.2"/><path d="M2.6 6.9 H11.6 M7.1 2.6 V11.4" stroke="#85a020" stroke-width="1.9" stroke-linecap="round"/></svg>
<div class="abs bt" style="left:236px;top:894px;letter-spacing:-0.024px;">Add Subinterface</div>
<svg class="abs" style="left:332px;top:892px" width="15" height="15" viewBox="0 0 15 15"><rect x="0.6" y="0.6" width="13.9" height="13" rx="3.2" fill="#fff" stroke="#516c82" stroke-width="1.2"/><rect x="4" y="6" width="7" height="1.9" fill="#8a2000"/></svg>
<div class="abs bt" style="left:349.7px;top:894px;letter-spacing:-0.099px;">Delete</div>
<div class="abs wt" style="left:214px;top:930px;letter-spacing:0.006px;">admin</div>
<div class="abs wt" style="left:249.5px;top:930px;letter-spacing:-0.020px;">| Logout</div>
<svg class="abs" style="left:1815px;top:929px" width="17" height="16" viewBox="0 0 17 16"><rect x="0" y="0" width="4" height="4" rx=".6" fill="#1f6080"/><rect x="1" y="1" width="2" height="2" fill="#fff"/><rect x="0" y="5.1" width="4" height="4" rx=".6" fill="#1f6080"/><rect x="1" y="6.1" width="2" height="2" fill="#fff"/><rect x="0" y="10.1" width="4" height="4" rx=".6" fill="#1f6080"/><rect x="1" y="11.1" width="2" height="2" fill="#fff"/><rect x="6" y="1.7" width="9.2" height="1.3" fill="#fff"/><rect x="6" y="6.6" width="2" height="1" fill="#fff"/><rect x="6" y="11.6" width="2" height="1" fill="#fff"/><polygon points="16.40,10.40 16.31,11.30 14.86,11.67 14.55,12.24 15.05,13.65 14.36,14.22 13.07,13.46 12.45,13.65 11.80,15.00 10.90,14.91 10.53,13.46 9.96,13.15 8.55,13.65 7.98,12.96 8.74,11.67 8.55,11.05 7.20,10.40 7.29,9.50 8.74,9.13 9.05,8.56 8.55,7.15 9.24,6.58 10.53,7.34 11.15,7.15 11.80,5.80 12.70,5.89 13.07,7.34 13.64,7.65 15.05,7.15 15.62,7.84 14.86,9.13 15.05,9.75" fill="#eea10a" stroke="#8f5c06" stroke-width=".8" stroke-linejoin="round"/><circle cx="11.200000000000001" cy="9.8" r="1.93" fill="#fbc230"/><circle cx="11.0" cy="10.6" r=".75" fill="#fff200"/><circle cx="13.100000000000001" cy="9.4" r=".5" fill="#8a5a00"/><circle cx="12.4" cy="12.0" r=".5" fill="#8a5a00"/></svg>
<div class="abs wt" style="left:1833px;top:931px;letter-spacing:-0.225px;">Tasks</div>
<div class="abs wt" style="left:1866px;top:931px;letter-spacing:-0.219px;">Language</div>
</body>
</html>
